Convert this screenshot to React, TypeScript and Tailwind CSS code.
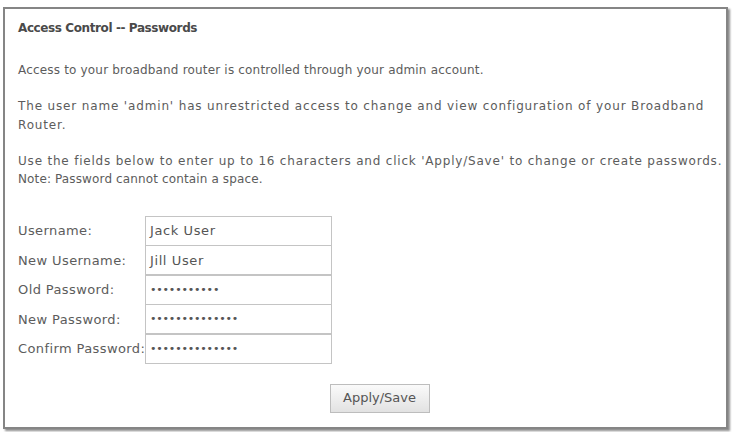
const rows = [
  { label: "Username:", value: "Jack User", type: "text" },
  { label: "New Username:", value: "Jill User", type: "text" },
  { label: "Old Password:", value: "•••••••••••", type: "password" },
  { label: "New Password:", value: "••••••••••••••", type: "password" },
  { label: "Confirm Password:", value: "••••••••••••••", type: "password" },
];

export default function App() {
  return (
    <div className="w-[734px] h-[432px] bg-white pt-[7px] pl-[3px] font-['DejaVu_Sans',sans-serif] text-[12px] text-[#5c5c5c]">
      <div className="w-[725px] h-[422px] border-2 border-[#858585] shadow-[2px_2px_2px_rgba(0,0,0,0.45)] pl-[13px] pt-[10px]">
        <h1 className="font-bold text-[#4a4a4a] leading-[18px] tracking-[-0.4px]">Access Control -- Passwords</h1>

        <p className="mt-[24px] leading-[18px] tracking-[0.18px]">
          Access to your broadband router is controlled through your admin account.
        </p>

        <p className="mt-[18px] leading-[19px] pr-[10px] tracking-[0.85px]">
          The user name 'admin' has unrestricted access to change and view configuration of your Broadband Router.
        </p>

        <p className="mt-[17px] leading-[18px]">
          <span className="tracking-[0.8px] whitespace-nowrap">
            Use the fields below to enter up to 16 characters and click 'Apply/Save' to change or create passwords.
          </span>
          <br />
          <span className="tracking-[0.13px]">Note: Password cannot contain a space.</span>
        </p>

        <div className="mt-[28px] flex flex-col text-[13px] tracking-[0.4px]">
          {rows.map((row) => (
            <div key={row.label} className="flex items-center h-[29.5px]">
              <span className="w-[127px] whitespace-nowrap">{row.label}</span>
              <div className="w-[187px] h-[30px] border border-[#c4c4c4] flex items-center pl-[4px] text-[#555]">
                {row.type === "password" ? (
                  <span className="text-[11px] tracking-[-0.2px]">{row.value}</span>
                ) : (
                  <span className="tracking-[0.6px]">{row.value}</span>
                )}
              </div>
            </div>
          ))}
        </div>

        <div className="mt-[20px] flex justify-center pl-[15px]">
          <button className="w-[100px] h-[29px] border border-[#bdbdbd] bg-gradient-to-b from-[#fafafa] to-[#e2e2e2] text-[#555] text-[13px]">
            Apply/Save
          </button>
        </div>
      </div>
    </div>
  );
}
